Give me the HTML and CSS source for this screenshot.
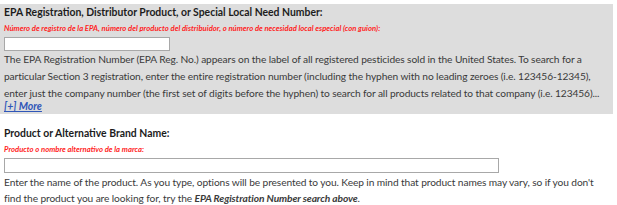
FILE: index.html
```html
<!DOCTYPE html>
<html>
<head>
<link rel="stylesheet" href="styles.css">
</head>
<body>

<div class="field shaded">
  <label class="title" for="regNum">EPA Registration, Distributor Product, or Special Local Need Number:</label>
  <div class="spanish">Número de registro de la EPA, número del producto del distribuidor, o número de necesidad local especial (con guion):</div>
  <input id="regNum" class="box short" type="text">
  <p class="help">The EPA Registration Number (EPA Reg. No.) appears on the label of all registered pesticides sold in the United States. To search for a particular Section 3 registration, enter the entire registration number (including the hyphen with no leading zeroes (i.e. 123456-12345), enter just the company number (the first set of digits before the hyphen) to search for all products related to that company (i.e. 123456)...</p>
  <a class="more" href="#">[+] More</a>
</div>

<div class="field plain">
  <label class="title" for="prodName">Product or Alternative Brand Name:</label>
  <div class="spanish">Producto o nombre alternativo de la marca:</div>
  <input id="prodName" class="box long" type="text">
  <p class="help tight">Enter the name of the product. As you type, options will be presented to you. Keep in mind that product names may vary, so if you don't find the product you are looking for, try the <b><i>EPA Registration Number search above</i></b>.</p>
</div>

</body>
</html>
```

FILE: styles.css
```css
body {
  margin: 0;
  padding-top: 4px;
  font-family: Lato, "Liberation Sans", sans-serif;
  font-size: 10.2px;
  letter-spacing: -0.1px;
  color: #3a3a3a;
  background: white;
}

.field {
  width: 613px;
  padding: 1px 8px 0 4px;
  box-sizing: border-box;
}

.shaded {
  background: #dddddd;
  height: 110px;
}

.plain {
  padding-top: 12px;
}

.title {
  display: block;
  font-weight: bold;
  font-size: 10.4px;
  letter-spacing: 0;
  color: #1c1c1c;
  line-height: 14px;
}

.spanish {
  color: #ff1f1f;
  font-style: italic;
  font-weight: bold;
  font-size: 7.7px;
  letter-spacing: 0;
  line-height: 10px;
  margin-top: 4px;
}

.box {
  display: block;
  height: 14px;
  margin: 4px 0 0 0;
  padding: 0;
  border: 1px solid #a8a8a8;
  background: white;
  box-sizing: border-box;
}

.short {
  width: 166px;
}

.long {
  width: 495px;
  height: 15px;
  margin-top: 4px;
}

.help {
  margin: 0;
  line-height: 16.8px;
}

.tight {
  margin-top: 1px;
  line-height: 16px;
}

.more {
  display: block;
  width: max-content;
  color: #2f56b8;
  font-style: italic;
  font-weight: bold;
  font-size: 10.5px;
  letter-spacing: 0;
  line-height: 12px;
  margin-top: -1px;
}
```
